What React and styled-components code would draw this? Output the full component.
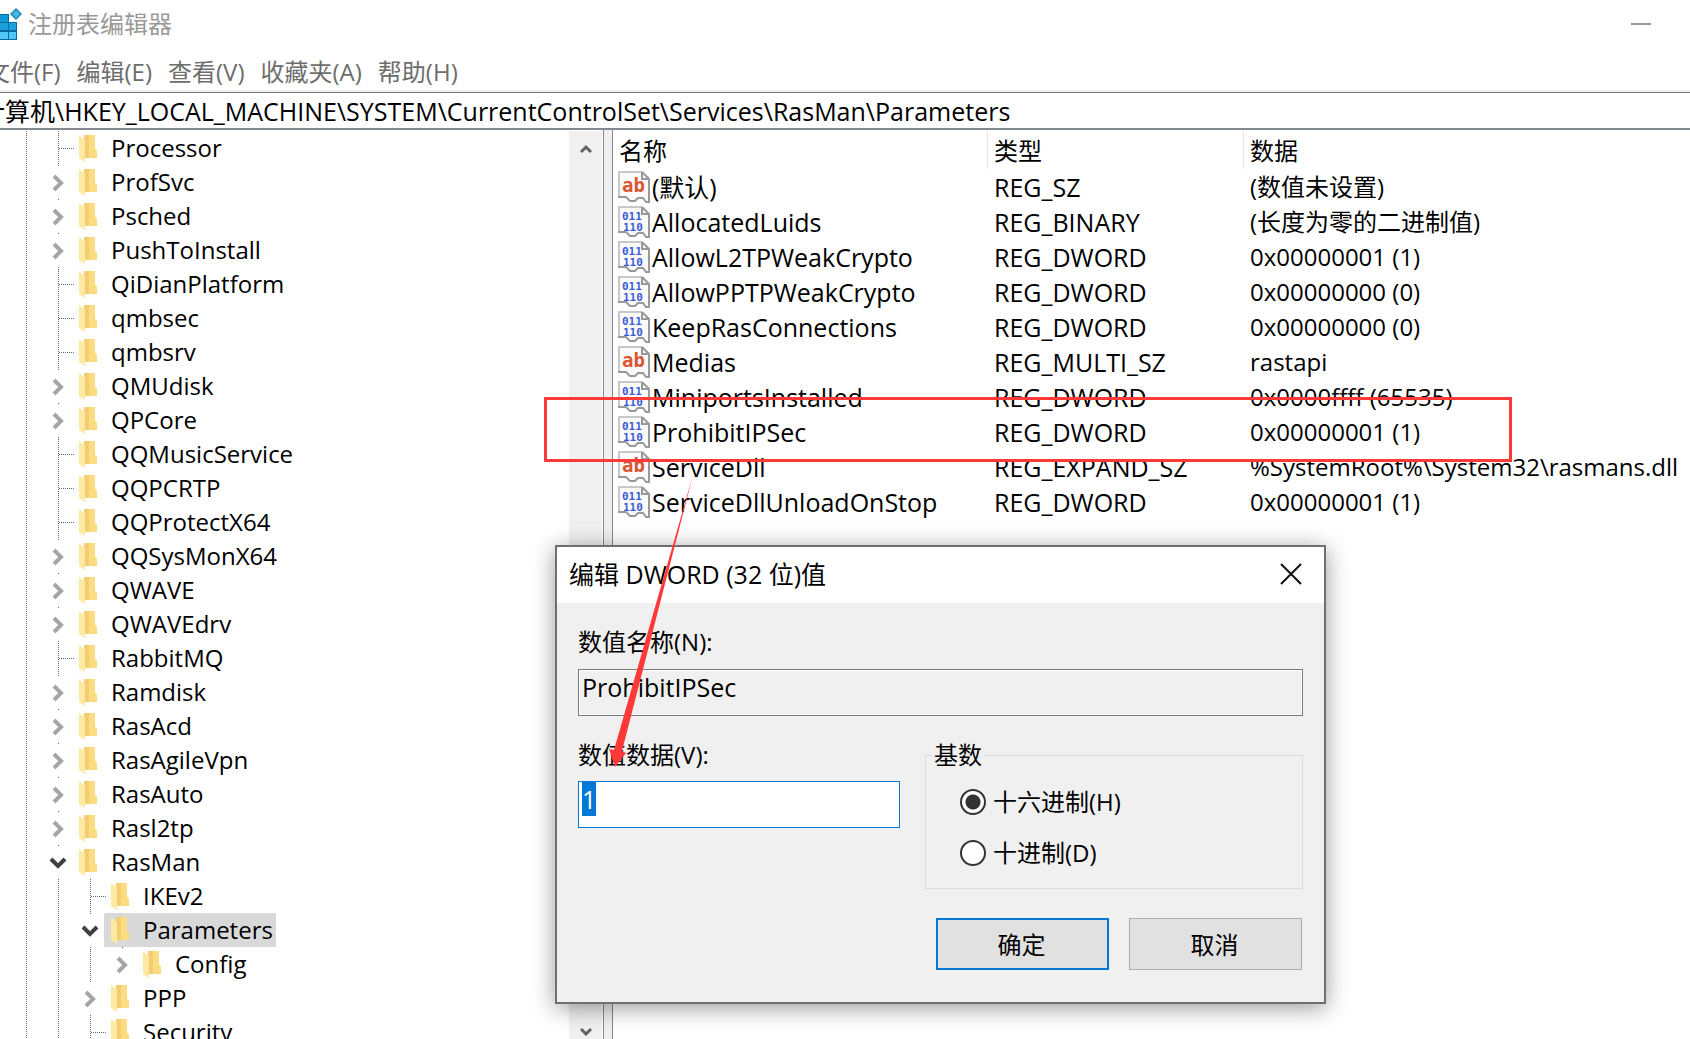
import React, { useState } from "react";
import styled, { createGlobalStyle } from "styled-components";

const GlobalStyle = createGlobalStyle`
  * {
    box-sizing: border-box;
  }
  body {
    margin: 0;
    overflow: hidden;
    background: #fff;
    color: #000;
    font-family: "Open Sans", "Noto Sans CJK SC", sans-serif;
    font-size: 24px;
  }
  button, input {
    font: inherit;
    color: inherit;
  }
`;

const Window = styled.div`
  position: relative;
  display: flex;
  flex-direction: column;
  height: 100vh;
  overflow: hidden;
`;

const TitleBar = styled.header`
  display: flex;
  align-items: center;
  height: 50px;
  flex: none;
  padding: 0 39px 2px 0;
  color: #999;
  h1 {
    flex: 1;
    margin: 0 0 0 5px;
    font-size: 24px;
    font-weight: 400;
    line-height: 32px;
  }
`;

const IconButton = styled.button`
  display: flex;
  align-items: center;
  justify-content: center;
  padding: 0;
  border: none;
  background: transparent;
`;

const MenuBar = styled.nav`
  display: flex;
  align-items: center;
  gap: 16px;
  flex: none;
  height: 42px;
  margin-left: -14px;
  padding-top: 2px;
  button {
    flex: none;
    padding: 0;
    border: none;
    background: transparent;
    color: #6d6d6d;
    font-size: 24px;
    line-height: 32px;
  }
`;

const AddressBar = styled.div`
  flex: none;
  height: 38px;
  border-top: 1px solid #7a7a7a;
  border-bottom: 2px solid #828790;
  box-shadow: 0 -2px 0 #f0f0f0;
  input {
    display: block;
    width: 100%;
    height: 35px;
    margin-left: -20px;
    padding: 0 0 2px;
    border: none;
    outline: none;
    background: transparent;
    font-size: 25px;
  }
`;

const Body = styled.div`
  display: flex;
  flex: 1;
  min-height: 0;
`;

const TreePane = styled.div`
  display: flex;
  flex: none;
  width: 604px;
  border-right: 1px solid #828790;
`;

const Tree = styled.ul`
  flex: 1;
  margin: 0;
  padding: 1px 0 0 10px;
  list-style: none;
  overflow: hidden;
`;

const TreeRow = styled.li`
  display: flex;
  height: 34px;
`;

const Guide = styled.span`
  flex: none;
  width: 32px;
  background: repeating-linear-gradient(#6a6a6a 0 1px, #fff 1px 2px) 16px 0 / 1px 100% no-repeat;
`;

const Branch = styled(Guide)`
  display: flex;
  align-items: center;
  justify-content: flex-end;
  &::after {
    content: "";
    width: 15px;
    height: 1px;
    background: repeating-linear-gradient(90deg, #6a6a6a 0 1px, #fff 1px 2px);
  }
`;

const Toggle = styled.button`
  flex: none;
  display: flex;
  align-items: center;
  justify-content: center;
  width: 32px;
  padding: 2px 0 0;
  border: none;
  background: linear-gradient(#6a6a6a, #6a6a6a) 16px 0 / 1px 1px no-repeat;
`;

const TreeLabel = styled.span`
  display: flex;
  align-items: center;
  gap: 13px;
  margin-left: -2px;
  padding: 0 3px 0 7px;
  line-height: 34px;
  background: ${({ $selected }) => $selected ? "#d9d9d9" : "transparent"};
`;

const ScrollBar = styled.div`
  display: flex;
  flex-direction: column;
  justify-content: space-between;
  flex: none;
  width: 33px;
  margin: 1px 1px 0 0;
  background: #f0f0f0;
  button {
    height: 36px;
  }
  button:last-child {
    height: 14px;
  }
`;

const Splitter = styled.div`
  flex: none;
  width: 9px;
  background: #f0f0f0;
  border-right: 1px solid #828790;
`;

const ListPane = styled.div`
  flex: 1;
  min-width: 0;
  overflow: hidden;
  padding-top: 1px;
`;

const ValueTable = styled.table`
  width: 100%;
  table-layout: fixed;
  border-collapse: separate;
  border-spacing: 0;
  th, td {
    padding: 0 0 0 6px;
    text-align: left;
    font-weight: 400;
    white-space: nowrap;
  }
  th {
    height: 38px;
    padding-top: 2px;
    line-height: 32px;
    border-right: 1px solid #e5e5e5;
  }
  th:last-child {
    border-right: none;
  }
  td {
    height: 35px;
    line-height: 34px;
    font-size: 25px;
  }
  td:first-child {
    padding-left: 5px;
  }
  td:last-child {
    font-size: 24px;
  }
`;

const NameCell = styled.span`
  display: flex;
  align-items: center;
  gap: 2px;
  height: 35px;
`;

const Dialog = styled.form`
  position: absolute;
  left: 555px;
  top: 545px;
  width: 771px;
  background: #f0f0f0;
  border: 2px solid #6f6f6f;
  box-shadow: 0 4px 22px rgba(0, 0, 0, 0.4);
`;

const DialogTitle = styled.div`
  display: flex;
  align-items: center;
  justify-content: space-between;
  height: 56px;
  padding: 0 22px 2px 12px;
  background: #fff;
  h2 {
    margin: 0;
    font-size: 25px;
    font-weight: 400;
    line-height: 32px;
  }
`;

const DialogBody = styled.div`
  display: grid;
  grid-template-columns: 322px 378px;
  gap: 23px 25px;
  padding: 23px 21px 32px;
`;

const Field = styled.div`
  display: flex;
  flex-direction: column;
  grid-column: ${({ $wide }) => $wide ? "1 / -1" : "auto"};
  label {
    height: ${({ $wide }) => $wide ? "43px" : "42px"};
    line-height: 32px;
  }
`;

const TextBox = styled.input`
  height: 47px;
  padding: 0 3px 11px;
  border: 1px solid ${({ readOnly }) => readOnly ? "#7a7a7a" : "#0078d7"};
  outline: none;
  background: ${({ readOnly }) => readOnly ? "#f0f0f0" : "#fff"};
  box-shadow: inset 0 0 0 1px #fff;
  font-size: 25px;
  &::selection {
    background: #0078d7;
    color: #fff;
  }
`;

const BaseGroup = styled.fieldset`
  display: flex;
  flex-direction: column;
  gap: 15px;
  height: 150px;
  margin: 0;
  padding: 13px 34px 0;
  border: 1px solid #dcdcdc;
  legend {
    margin-left: -28px;
    padding: 0 2px;
    line-height: 32px;
  }
  label {
    display: flex;
    align-items: center;
    gap: 7px;
    height: 36px;
    line-height: 36px;
  }
`;

const Radio = styled.input`
  appearance: none;
  width: 26px;
  height: 26px;
  margin: 0;
  border: 2px solid #333;
  border-radius: 50%;
  background: #fff;
  &:checked {
    background: radial-gradient(circle, #333 0 7px, #fff 8px);
  }
`;

const Buttons = styled.div`
  grid-column: 1 / -1;
  display: flex;
  justify-content: flex-end;
  gap: 20px;
  padding: 6px 1px 0 0;
`;

const DialogButton = styled.button`
  width: 173px;
  height: 52px;
  padding: 0 2px 2px 0;
  border: ${({ $primary }) => $primary ? "2px solid #0078d7" : "1px solid #adadad"};
  background: #e1e1e1;
`;

const Highlight = styled.div`
  position: absolute;
  left: 544px;
  top: 397px;
  width: 968px;
  height: 65px;
  border: 3px solid #ff3838;
  pointer-events: none;
`;

const Arrow = styled.svg`
  position: absolute;
  left: 605px;
  top: 475px;
  pointer-events: none;
`;

const AppIcon = () => (
  <svg width="23" height="32" viewBox="0 0 23 32">
    <path d="M0 6H9V14H17V32H0Z" fill="#086a9e" />
    <path d="M0 7H8V14H0Z" fill="#0f9ad6" />
    <path d="M0 15H8V22H0ZM9 15H16V22H9Z" fill="#1ba0dc" />
    <path d="M0 24H8V31H0ZM9 24H16V31H9Z" fill="#4fc8f8" />
    <path d="M16 0L22 6L16 12L10 6Z" fill="#1f86b4" />
    <path d="M16 2L20 6L16 10L12 6Z" fill="#43b9e8" />
  </svg>
);

const FolderIcon = () => (
  <svg width="19" height="28" viewBox="0 0 19 28">
    <path d="M1 1H16V15L18 17V24H5V1Z" fill="#f2ce70" />
    <path d="M10 1H16V15L18 17V24H10Z" fill="#fbdc80" />
    <path d="M0 1L6 6V28L0 24Z" fill="#ffe9a2" />
  </svg>
);

const ValueIcon = ({ type }) => (
  <svg width="32" height="32" viewBox="0 0 32 32">
    <path d="M1 1H24L31 8V31H28L25 27H20L17 30H12L8 26H1Z" fill="#fafafa" />
    <path d="M1 26V1H24" fill="none" stroke="#c8c8c8" strokeWidth="2" />
    <path d="M24 1L31 8V31H28L25 27H20L17 30H12L8 26H0M24 1V8H31" fill="none" stroke="#999" strokeWidth="2" />
    {type === "ab" ? (
      <text x="4" y="21" fontFamily="DejaVu Sans Mono" fontWeight="bold" fontSize="19" fill="#da5530">ab</text>
    ) : (
      <>
        <text x="4" y="14" fontFamily="DejaVu Sans Mono" fontWeight="bold" fontSize="11" fill="#3a5bd9">011</text>
        <text x="5" y="25" fontFamily="DejaVu Sans Mono" fontWeight="bold" fontSize="11" fill="#3a5bd9">110</text>
      </>
    )}
  </svg>
);

const treeItems = [
  ["Processor", 2],
  ["ProfSvc", 2, "closed"],
  ["Psched", 2, "closed"],
  ["PushToInstall", 2, "closed"],
  ["QiDianPlatform", 2],
  ["qmbsec", 2],
  ["qmbsrv", 2],
  ["QMUdisk", 2, "closed"],
  ["QPCore", 2, "closed"],
  ["QQMusicService", 2],
  ["QQPCRTP", 2],
  ["QQProtectX64", 2],
  ["QQSysMonX64", 2, "closed"],
  ["QWAVE", 2, "closed"],
  ["QWAVEdrv", 2, "closed"],
  ["RabbitMQ", 2],
  ["Ramdisk", 2, "closed"],
  ["RasAcd", 2, "closed"],
  ["RasAgileVpn", 2, "closed"],
  ["RasAuto", 2, "closed"],
  ["Rasl2tp", 2, "closed"],
  ["RasMan", 2, "open"],
  ["IKEv2", 3],
  ["Parameters", 3, "open"],
  ["Config", 4, "closed"],
  ["PPP", 3, "closed"],
  ["Security", 3],
];

const values = [
  ["ab", "(默认)", "REG_SZ", "(数值未设置)"],
  ["bin", "AllocatedLuids", "REG_BINARY", "(长度为零的二进制值)"],
  ["bin", "AllowL2TPWeakCrypto", "REG_DWORD", "0x00000001 (1)"],
  ["bin", "AllowPPTPWeakCrypto", "REG_DWORD", "0x00000000 (0)"],
  ["bin", "KeepRasConnections", "REG_DWORD", "0x00000000 (0)"],
  ["ab", "Medias", "REG_MULTI_SZ", "rastapi"],
  ["bin", "MiniportsInstalled", "REG_DWORD", "0x0000ffff (65535)"],
  ["bin", "ProhibitIPSec", "REG_DWORD", "0x00000001 (1)"],
  ["ab", "ServiceDll", "REG_EXPAND_SZ", "%SystemRoot%\\System32\\rasmans.dll"],
  ["bin", "ServiceDllUnloadOnStop", "REG_DWORD", "0x00000001 (1)"],
];

const menus = ["文件(F)", "编辑(E)", "查看(V)", "收藏夹(A)", "帮助(H)"];

const TreeItem = ({ name, level, state, selected }) => (
  <TreeRow>
    {Array.from({ length: level - 1 }, (_, i) => <Guide key={i} />)}
    {state ? (
      <Toggle aria-label={name} aria-expanded={state === "open"}>
        {state === "open" ? (
          <svg width="18" height="12" viewBox="0 0 18 12">
            <path d="M2 2L9 9L16 2" fill="none" stroke="#404040" strokeWidth="4" />
          </svg>
        ) : (
          <svg width="12" height="18" viewBox="0 0 12 18">
            <path d="M2 2L9 9L2 16" fill="none" stroke="#a6a6a6" strokeWidth="4" />
          </svg>
        )}
      </Toggle>
    ) : <Branch />}
    <TreeLabel $selected={selected}>
      <FolderIcon />
      {name}
    </TreeLabel>
  </TreeRow>
);

const EditDialog = () => {
  const [value, setValue] = useState("1");
  const [base, setBase] = useState("hex");

  return (
    <Dialog onSubmit={(e) => e.preventDefault()}>
      <DialogTitle>
        <h2>编辑 DWORD (32 位)值</h2>
        <IconButton type="button" aria-label="关闭">
          <svg width="22" height="22" viewBox="0 0 22 22">
            <path d="M1 1L21 21M21 1L1 21" stroke="#111" strokeWidth="2" />
          </svg>
        </IconButton>
      </DialogTitle>
      <DialogBody>
        <Field $wide>
          <label htmlFor="value-name">数值名称(N):</label>
          <TextBox id="value-name" readOnly value="ProhibitIPSec" />
        </Field>
        <Field>
          <label htmlFor="value-data">数值数据(V):</label>
          <TextBox
            id="value-data"
            autoFocus
            value={value}
            onFocus={(e) => e.target.select()}
            onChange={(e) => setValue(e.target.value)}
          />
        </Field>
        <BaseGroup>
          <legend>基数</legend>
          <label>
            <Radio type="radio" name="base" checked={base === "hex"} onChange={() => setBase("hex")} />
            十六进制(H)
          </label>
          <label>
            <Radio type="radio" name="base" checked={base === "dec"} onChange={() => setBase("dec")} />
            十进制(D)
          </label>
        </BaseGroup>
        <Buttons>
          <DialogButton type="submit" $primary>确定</DialogButton>
          <DialogButton type="button">取消</DialogButton>
        </Buttons>
      </DialogBody>
    </Dialog>
  );
};

const App = () => {
  const [path, setPath] = useState("计算机\\HKEY_LOCAL_MACHINE\\SYSTEM\\CurrentControlSet\\Services\\RasMan\\Parameters");

  return (
    <>
      <GlobalStyle />
      <Window>
        <TitleBar>
          <AppIcon />
          <h1>注册表编辑器</h1>
          <IconButton aria-label="最小化">
            <svg width="20" height="2" viewBox="0 0 20 2">
              <rect width="20" height="2" fill="#999" />
            </svg>
          </IconButton>
        </TitleBar>
        <MenuBar>
          {menus.map((menu) => <button key={menu}>{menu}</button>)}
        </MenuBar>
        <AddressBar>
          <input aria-label="地址" value={path} onChange={(e) => setPath(e.target.value)} />
        </AddressBar>
        <Body>
          <TreePane>
            <Tree>
              {treeItems.map(([name, level, state]) => (
                <TreeItem key={name} name={name} level={level} state={state} selected={name === "Parameters"} />
              ))}
            </Tree>
            <ScrollBar>
              <IconButton aria-label="向上滚动">
                <svg width="12" height="10" viewBox="0 0 12 10">
                  <path d="M1 8L6 3L11 8" fill="none" stroke="#606060" strokeWidth="3" />
                </svg>
              </IconButton>
              <IconButton aria-label="向下滚动">
                <svg width="12" height="10" viewBox="0 0 12 10">
                  <path d="M1 2L6 7L11 2" fill="none" stroke="#606060" strokeWidth="3" />
                </svg>
              </IconButton>
            </ScrollBar>
          </TreePane>
          <Splitter />
          <ListPane>
            <ValueTable>
              <colgroup>
                <col width="375" />
                <col width="256" />
                <col />
              </colgroup>
              <thead>
                <tr>
                  <th>名称</th>
                  <th>类型</th>
                  <th>数据</th>
                </tr>
              </thead>
              <tbody>
                {values.map(([icon, name, type, data]) => (
                  <tr key={name}>
                    <td>
                      <NameCell>
                        <ValueIcon type={icon} />
                        {name}
                      </NameCell>
                    </td>
                    <td>{type}</td>
                    <td>{data}</td>
                  </tr>
                ))}
              </tbody>
            </ValueTable>
          </ListPane>
        </Body>
        <EditDialog />
        <Highlight />
        <Arrow width="90" height="293" viewBox="0 0 90 293">
          <path d="M88 0L17 276L21 278L10 292L4 274L9 275Z" fill="#ff3838" />
        </Arrow>
      </Window>
    </>
  );
};

export default App;
